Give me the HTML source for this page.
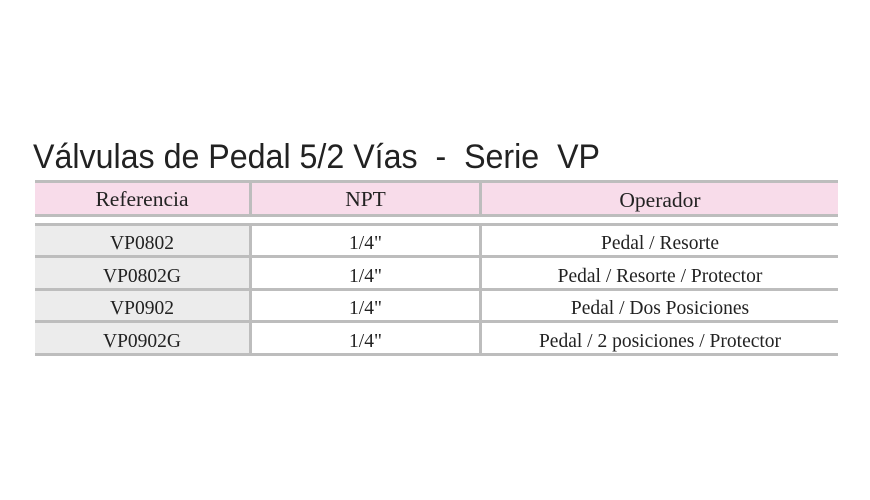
<!DOCTYPE html>
<html><head><meta charset="utf-8"><style>
body{margin:0;width:870px;height:500px;background:#fff;position:relative;overflow:hidden;font-family:"Liberation Serif",serif;color:#222}
.a{position:absolute}
.h{background:#bdbdbd}
.c{position:absolute;text-align:center;font-size:19.5px;line-height:30px}
.hd{font-size:21.5px}
</style></head><body>
<svg class="a" style="left:0;top:0" width="870" height="180"><text x="33" y="168" font-family="Liberation Sans, DejaVu Sans, sans-serif" font-size="34" fill="#222" textLength="567" lengthAdjust="spacingAndGlyphs">Válvulas de Pedal 5/2 Vías&#160; - &#160;Serie&#160; VP</text></svg>
<!-- header -->
<div class="a h" style="left:35px;top:180px;width:803px;height:3px"></div>
<div class="a" style="left:35px;top:183px;width:803px;height:31px;background:#f8dcea"></div>
<div class="a h" style="left:35px;top:214px;width:803px;height:3px"></div>
<div class="a h" style="left:249px;top:183px;width:3px;height:31px"></div>
<div class="a h" style="left:479px;top:183px;width:3px;height:31px"></div>
<div class="c hd" style="left:35px;top:184px;width:214px">Referencia</div>
<div class="c hd" style="left:252px;top:184px;width:227px">NPT</div>
<div class="c hd" style="left:482px;top:185px;width:356px">Operador</div>
<!-- body -->
<div class="a" style="left:35px;top:225px;width:214px;height:130px;background:#ececec"></div>
<div class="a h" style="left:35px;top:223px;width:803px;height:3px"></div>
<div class="a h" style="left:35px;top:255px;width:803px;height:3px"></div>
<div class="a h" style="left:35px;top:288px;width:803px;height:3px"></div>
<div class="a h" style="left:35px;top:320px;width:803px;height:3px"></div>
<div class="a h" style="left:35px;top:353px;width:803px;height:3px"></div>
<div class="a h" style="left:249px;top:223px;width:3px;height:133px"></div>
<div class="a h" style="left:479px;top:223px;width:3px;height:133px"></div>

<div class="c" style="left:35px;top:229px;width:214px">VP0802</div>
<div class="c" style="left:252px;top:229px;width:227px">1/4"</div>
<div class="c" style="left:482px;top:229px;width:356px">Pedal / Resorte</div>

<div class="c" style="left:35px;top:262px;width:214px">VP0802G</div>
<div class="c" style="left:252px;top:262px;width:227px">1/4"</div>
<div class="c" style="left:482px;top:262px;width:356px">Pedal / Resorte / Protector</div>

<div class="c" style="left:35px;top:294px;width:214px">VP0902</div>
<div class="c" style="left:252px;top:294px;width:227px">1/4"</div>
<div class="c" style="left:482px;top:294px;width:356px">Pedal / Dos Posiciones</div>

<div class="c" style="left:35px;top:327px;width:214px">VP0902G</div>
<div class="c" style="left:252px;top:327px;width:227px">1/4"</div>
<div class="c" style="left:482px;top:327px;width:356px">Pedal / 2 posiciones / Protector</div>
</body></html>
